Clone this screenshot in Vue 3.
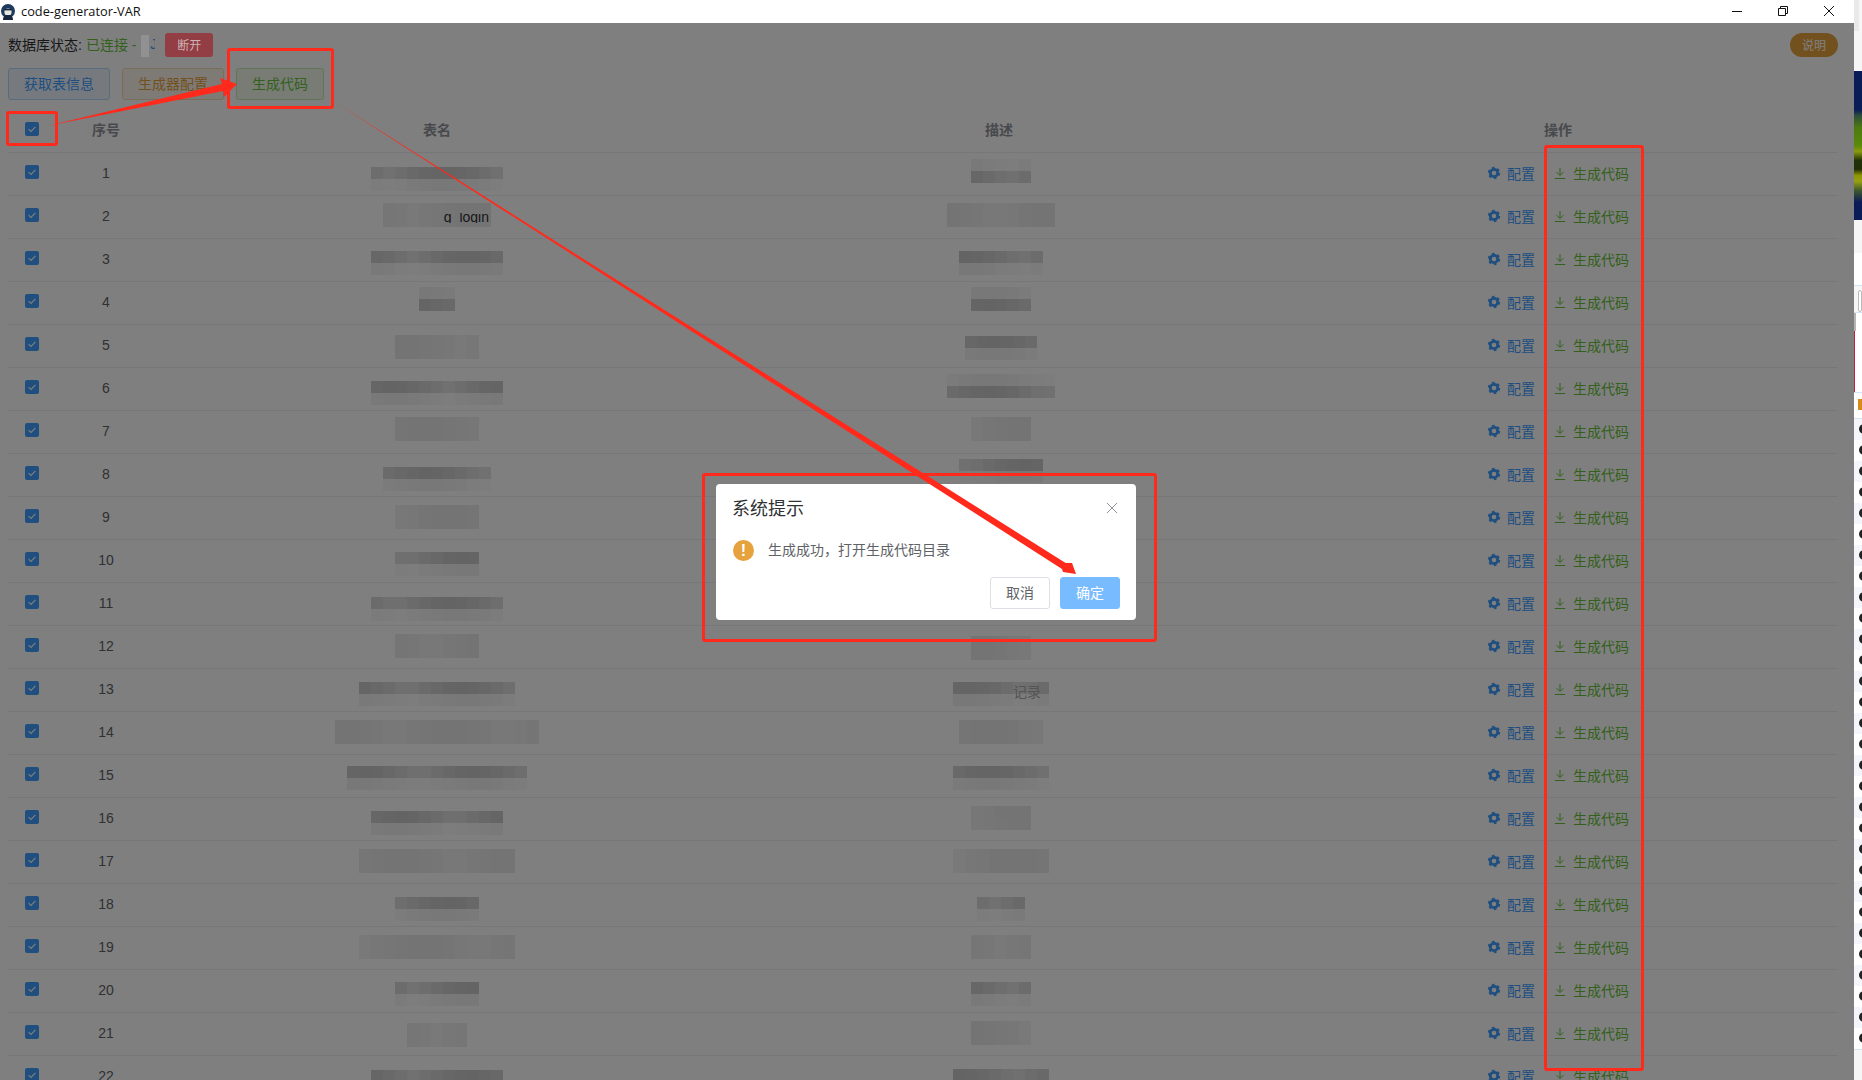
<script setup>
/**
 * Table of database tables behind a "generation finished" message box,
 * with the red hand-drawn annotations of the screenshot on top.
 */
import { computed } from 'vue';

// [name cells, name band, name shift, desc cells, desc band, desc shift]
// band: 0 = dark on top, 1 = dark below, 2 = both light
const blurSpec = [
  [11, 0, 6, 5, 1, -2],
  [9, 2, -1, 9, 2, -1],
  [11, 0, 4, 7, 0, 4],
  [3, 1, -3, 5, 1, -3],
  [7, 2, 2, 6, 0, 3],
  [11, 0, 5, 9, 1, -2],
  [7, 2, -2, 5, 2, -2],
  [9, 0, 5, 7, 0, -3],
  [7, 2, 0, 7, 2, 0],
  [7, 0, 4, 7, 0, 4],
  [11, 0, 6, 7, 0, 4],
  [7, 2, 0, 5, 2, 2],
  [13, 0, 5, 8, 0, 5],
  [17, 2, 0, 7, 2, 0],
  [15, 0, 3, 8, 0, 3],
  [11, 0, 5, 5, 2, 0],
  [13, 2, 0, 8, 2, 0],
  [7, 0, 5, 4, 0, 5],
  [13, 2, 0, 5, 2, 0],
  [7, 0, 4, 5, 0, 4],
  [5, 2, 2, 5, 2, 0],
  [11, 0, 6, 8, 0, 5],
];

function cells(count, band, seed) {
  const out = [];
  for (let row = 0; row < 2; row++) {
    for (let i = 0; i < count; i++) {
      const noise = Math.abs(Math.sin(seed * 12.9 + i * 78.2 + row * 37.7)) * 0.1;
      const dark = band === row;
      const base = dark ? 0.11 : band === 2 ? 0.05 : 0.015;
      out.push((base + (dark ? noise : noise * 0.4)).toFixed(3));
    }
  }
  return out;
}

const rows = computed(() =>
  blurSpec.map((s, i) => ({
    no: i + 1,
    name: { count: s[0], shift: s[2], cells: cells(s[0], s[1], i + 1) },
    desc: { count: s[3], shift: s[5], cells: cells(s[3], s[4], i + 31) },
  })),
);

const iconRows = Array.from({ length: 30 }, (_, i) => i);
</script>

<template>
  <div class="app">
    <div class="main">
      <div class="titlebar">
        <svg class="logo" viewBox="0 0 16 16" width="16" height="16">
          <circle cx="8" cy="7" r="7" fill="#1f3a5f" />
          <circle cx="8" cy="8" r="3.6" fill="#e9e6df" />
          <path d="M3 16c0-4 2-5 5-5s5 1 5 5z" fill="#17263c" />
          <path d="M4.4 6.4h7.2V5H4.4z" fill="#17263c" />
        </svg>
        <span class="app-name">code-generator-VAR</span>
        <div class="win-btns">
          <svg viewBox="0 0 12 12" width="12" height="12"><path d="M1 6.5h10" stroke="#111" fill="none" /></svg>
          <svg viewBox="0 0 12 12" width="12" height="12"><path d="M1.5 3.5h7v7h-7zM3.5 3.5v-2h7v7h-2" stroke="#111" fill="none" /></svg>
          <svg viewBox="0 0 12 12" width="12" height="12"><path d="M1 1l10 10M11 1L1 11" stroke="#111" fill="none" /></svg>
        </div>
      </div>

      <div class="page">
        <div class="status">
          <span class="status-label">数据库状态:</span>
          <span class="status-ok">已连接 - </span>
          <span class="status-db">J</span>
          <button class="btn-mini danger">断开</button>
          <button class="btn-mini help">说明</button>
        </div>

        <div class="tools">
          <button class="btn plain-primary">获取表信息</button>
          <button class="btn plain-warning">生成器配置</button>
          <button class="btn plain-success">生成代码</button>
        </div>

        <div class="table">
          <div class="tr head">
            <div class="td"><span class="check"><svg viewBox="0 0 14 14"><path d="M3.6 7.2l2.4 2.3 4.4-4.6" /></svg></span></div>
            <div class="td">序号</div>
            <div class="td">表名</div>
            <div class="td">描述</div>
            <div class="td">操作</div>
          </div>
          <div v-for="row in rows" :key="row.no" class="tr">
            <div class="td"><span class="check"><svg viewBox="0 0 14 14"><path d="M3.6 7.2l2.4 2.3 4.4-4.6" /></svg></span></div>
            <div class="td">{{ row.no }}</div>
            <div class="td">
              <div class="blur" :style="{ width: row.name.count * 12 + 'px', marginTop: row.name.shift * 2 + 'px' }">
                <i v-for="(a, i) in row.name.cells" :key="i" :style="{ background: `rgba(0,0,0,${a})` }"></i>
                <span v-if="row.no === 2" class="leak leak-name">_   g_login</span>
              </div>
            </div>
            <div class="td td-desc">
              <div class="blur" :style="{ width: row.desc.count * 12 + 'px', marginTop: row.desc.shift * 2 + 'px' }">
                <i v-for="(a, i) in row.desc.cells" :key="i" :style="{ background: `rgba(0,0,0,${a})` }"></i>
                <span v-if="row.no === 13" class="leak leak-desc">记录</span>
              </div>
            </div>
            <div class="td ops">
              <a class="op op-config">
                <svg viewBox="0 0 14 14" width="14" height="14">
                  <circle class="gear-ring" cx="7" cy="7" r="3.7" />
                  <circle class="gear-teeth" cx="7" cy="7" r="5.2" />
                </svg>
                配置
              </a>
              <a class="op op-gen">
                <svg viewBox="0 0 14 14" width="14" height="14">
                  <path d="M7 2v7M3.6 6.2L7 9.6l3.4-3.4M1.8 12.5h10.4" />
                </svg>
                生成代码
              </a>
            </div>
          </div>
        </div>

        <div class="mask">
          <div class="box">
            <div class="box-head">
              <span class="box-title">系统提示</span>
              <svg class="box-close" viewBox="0 0 12 12" width="12" height="12"><path d="M1 1l10 10M11 1L1 11" /></svg>
            </div>
            <div class="box-body">
              <span class="warn-icon">!</span>
              <span class="box-msg">生成成功，打开生成代码目录</span>
            </div>
            <div class="box-foot">
              <button class="btn cancel">取消</button>
              <button class="btn confirm">确定</button>
            </div>
          </div>
        </div>

        <svg class="marks" width="1854" height="1057" viewBox="0 23 1854 1057">
          <rect class="smudge" x="141" y="35" width="8" height="22" />
          <g class="boxes">
            <rect x="7.5" y="112.5" width="49" height="32" rx="1.5" />
            <rect x="228.5" y="49.5" width="104" height="58" rx="1.5" />
            <rect x="1545.5" y="146.5" width="97" height="923" rx="1.5" />
            <rect x="703.5" y="474.5" width="452" height="166" rx="1.5" />
          </g>
          <polygon class="ink" points="47,126 222,84 220,78 237,84 224,97 223,91" />
          <polygon class="ink" points="333,101 1065.6,563 1072,563 1076,574 1063,572 1062,569" />
        </svg>
      </div>
    </div>

    <aside class="strip">
      <div class="s-tab"></div>
      <div class="s-pad s-pad-a"></div>
      <div class="s-photo"></div>
      <div class="s-pad s-pad-b"></div>
      <div class="s-card"></div>
      <div class="s-input"><span></span></div>
      <div class="s-thumb"></div>
      <div class="s-fav"><span></span></div>
      <div v-for="i in iconRows" :key="i" class="s-row"><span></span></div>
      <div class="s-end"></div>
    </aside>
  </div>
</template>

<style>
html, body {
  margin: 0;
  background: #fff;
  overflow: hidden;
}
</style>

<style scoped>
.app {
  display: flex;
  width: 1862px;
  height: 1080px;
  overflow: hidden;
  font-family: "Liberation Sans", "Noto Sans CJK SC", sans-serif;
  font-size: 14px;
  color: #606266;
}
.main {
  width: 1854px;
  display: flex;
  flex-direction: column;
}

/* ─── Title bar ─────────────────────────────────────────── */
.titlebar {
  height: 23px;
  flex: none;
  display: flex;
  align-items: center;
  background: #fff;
}
.logo {
  margin-right: 5px;
}
.app-name {
  margin-bottom: 2px;
  font-family: "Open Sans", "Liberation Sans", sans-serif;
  font-size: 12.8px;
  color: #111;
}
.win-btns {
  margin-left: auto;
  margin-right: 19px;
  margin-bottom: 2px;
  display: flex;
  gap: 34px;
}

/* ─── Page ──────────────────────────────────────────────── */
.page {
  position: relative;
  flex: 1;
  min-height: 0;
  overflow: hidden;
  padding: 0 16px 0 8px;
}
.status {
  display: flex;
  align-items: center;
  height: 24px;
  margin-top: 10px;
}
.status-label {
  margin-right: 4px;
  margin-bottom: 2px;
  color: #303133;
}
.status-ok {
  margin-bottom: 2px;
  color: #67c23a;
  white-space: pre;
}
.status-db {
  width: 5px;
  margin-left: 10px;
  margin-bottom: 2px;
  overflow: hidden;
  color: #409eff;
}
.btn-mini {
  height: 24px;
  border: none;
  padding: 0 0 1px;
  font: inherit;
  font-size: 12px;
  color: #fff;
}
.danger {
  position: relative;
  z-index: 2;
  width: 48px;
  margin-left: 10px;
  border-radius: 3px;
  background: #933e44;
  color: #cdb4b4;
}
.help {
  margin-left: auto;
  width: 48px;
  border-radius: 12px;
  background: #e6a23c;
}
.tools {
  display: flex;
  gap: 12px;
  margin-top: 11px;
  height: 32px;
}
.btn {
  height: 32px;
  padding: 0 15px 2px;
  border: 1px solid #dcdfe6;
  border-radius: 3px;
  font: inherit;
  font-size: 14px;
  background: #fff;
}
.plain-primary {
  color: #409eff;
  background: #ecf5ff;
  border-color: #b3d8ff;
}
.plain-warning {
  color: #e6a23c;
  background: #fdf6ec;
  border-color: #f5dab1;
}
.plain-success {
  color: #67c23a;
  background: #f0f9eb;
  border-color: #c2e7b0;
}

/* ─── Table ─────────────────────────────────────────────── */
.table {
  margin-top: 8px;
}
.tr {
  display: grid;
  grid-template-columns: 48px 98px 566px 558px 560px;
  height: 43px;
  box-sizing: border-box;
  border-bottom: 1px solid #ebeef5;
}
.tr.head {
  height: 45px;
  font-weight: 700;
  color: #909399;
}
.td {
  display: flex;
  align-items: center;
  justify-content: center;
  min-width: 0;
  padding-bottom: 2px;
}
.td:nth-child(2) {
  padding-left: 2px;
}
.td-desc {
  padding-left: 4px;
}
.check {
  width: 14px;
  height: 14px;
  margin-bottom: 3px;
  border-radius: 2px;
  background: #409eff;
}
.head .check {
  margin-bottom: 1px;
}
.check svg {
  display: block;
  width: 14px;
  height: 14px;
  fill: none;
  stroke: #fff;
  stroke-width: 1.1;
}
.blur {
  position: relative;
  display: flex;
  flex-wrap: wrap;
  height: 24px;
}
.blur i {
  width: 12px;
  height: 12px;
}
.leak {
  position: absolute;
  white-space: pre;
  color: #303133;
}
.leak-name {
  right: 2px;
  top: 10px;
  height: 10px;
  overflow: hidden;
  line-height: 8px;
}
.leak-desc {
  right: 8px;
  top: -1px;
  color: #a8a8a8;
}
.ops {
  gap: 18px;
}
.op {
  display: flex;
  align-items: center;
  gap: 6px;
}
.op-config {
  color: #409eff;
}
.op-gen {
  color: #67c23a;
}
.gear-ring {
  fill: none;
  stroke: currentColor;
  stroke-width: 2.8;
}
.gear-teeth {
  fill: none;
  stroke: currentColor;
  stroke-width: 2;
  stroke-dasharray: 2.6 2.85;
}
.op-gen svg path {
  fill: none;
  stroke: currentColor;
  stroke-width: 1;
}

/* ─── Message box ───────────────────────────────────────── */
.mask {
  position: absolute;
  inset: 0;
  background: rgba(0, 0, 0, 0.5);
}
.box {
  position: absolute;
  left: 716px;
  top: 461px;
  box-sizing: border-box;
  width: 420px;
  height: 136px;
  padding: 16px 16px 10px;
  border-radius: 4px;
  background: #fff;
}
.box-head {
  display: flex;
  align-items: center;
  justify-content: space-between;
  height: 18px;
  padding-right: 2px;
}
.box-title {
  font-size: 18px;
  line-height: 18px;
  color: #303133;
}
.box-close {
  margin-bottom: 2px;
  fill: none;
  stroke: #909399;
  stroke-width: 1;
}
.box-body {
  display: flex;
  align-items: center;
  gap: 13px;
  height: 24px;
  margin-top: 20px;
  color: #606266;
}
.box-msg {
  margin-bottom: 2px;
  margin-left: 1px;
}
.warn-icon {
  width: 21px;
  height: 21px;
  margin-left: 1px;
  border-radius: 50%;
  background: #e6a23c;
  color: #fff;
  font-size: 16px;
  font-weight: 700;
  line-height: 21px;
  text-align: center;
}
.box-foot {
  display: flex;
  justify-content: flex-end;
  gap: 10px;
  margin-top: 15px;
}
.box-foot .btn {
  width: 60px;
  padding: 0 0 2px;
}
.cancel {
  color: #606266;
}
.confirm {
  color: #fff;
  background: #79bbff;
  border-color: #79bbff;
}

/* ─── Red annotations ───────────────────────────────────── */
.marks {
  position: absolute;
  left: 0;
  top: 0;
  pointer-events: none;
}
.boxes rect {
  fill: none;
  stroke: #ff2a1c;
  stroke-width: 3;
}
.ink {
  fill: #ff2a1c;
}
.smudge {
  fill: #fff;
  opacity: 0.14;
}

/* ─── Window behind the app, 8px visible ────────────────── */
.strip {
  width: 8px;
  height: 1080px;
  flex: none;
  display: flex;
  flex-direction: column;
  overflow: hidden;
  background: #f6f6f6;
}
.s-tab {
  height: 31px;
  flex: none;
  background: linear-gradient(90deg, #e9e9e9 0 5px, #f6f6f6 5px);
}
.s-pad-a {
  height: 40px;
  flex: none;
}
.s-photo {
  height: 149px;
  flex: none;
  background: linear-gradient(
    180deg,
    #0a1c58 0 26%,
    #2d4e3a 30%,
    #4d7a10 38%,
    #5a8a0a 50%,
    #8a9a10 54%,
    #1e3208 60%,
    #232f06 66%,
    #8d9505 70%,
    #97a012 74%,
    #405a2c 80%,
    #0a1c58 88%
  );
}
.s-pad-b {
  height: 33px;
  flex: none;
}
.s-card {
  height: 32px;
  flex: none;
  background: #fff;
  border-bottom: 1px solid #d5e4f5;
}
.s-input {
  height: 27px;
  flex: none;
  padding: 4px 0 0 4px;
  box-sizing: border-box;
  border-bottom: 1px solid #d5e4f5;
}
.s-input span {
  display: block;
  height: 20px;
  border: 1px solid #bbb;
  border-radius: 4px;
  background: #fff;
}
.s-thumb {
  height: 79px;
  flex: none;
  background:
    linear-gradient(#b4b4b4, #b4b4b4) 0 0 / 2px 18px no-repeat,
    linear-gradient(#c0203a, #c0203a) 0 18px / 1px 62px no-repeat,
    #fff;
  border-bottom: 1px solid #d5e4f5;
}
.s-fav {
  height: 26px;
  flex: none;
  padding-top: 6px;
  box-sizing: border-box;
  background: #fff;
  border-bottom: 1px solid #d5e4f5;
}
.s-fav span {
  display: block;
  width: 8px;
  height: 11px;
  margin-left: 4px;
  background: #d98a1a;
}
.s-row {
  height: 21px;
  flex: none;
  padding: 5px 0 0 5px;
  box-sizing: border-box;
  background: #fff;
}
.s-row:nth-child(odd) {
  background: #f4f6fb;
}
.s-row span {
  display: block;
  width: 10px;
  height: 10px;
  border-radius: 50%;
  background: #222;
}
.s-end {
  border-top: 1px solid #d5e4f5;
  flex: 1;
}
</style>
